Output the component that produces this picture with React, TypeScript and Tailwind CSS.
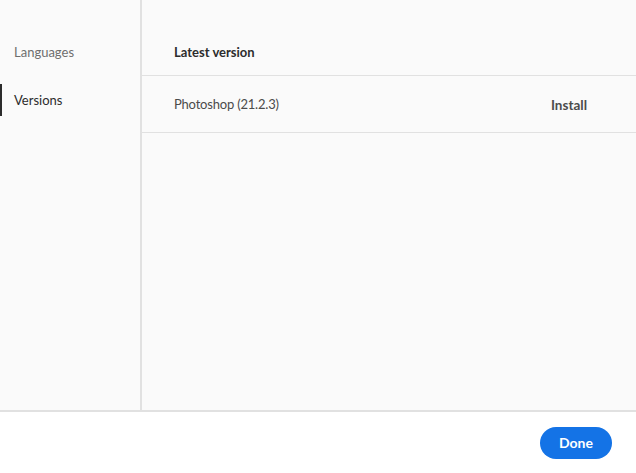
import React from 'react';

const font = { fontFamily: 'Lato, "Liberation Sans", sans-serif' };

export default function App() {
  return (
    <div className="w-[636px] h-[473px] flex flex-col bg-white text-[13px]" style={font}>
      {/* Body */}
      <div className="flex h-[412px] bg-[#fafafa] border-b-2 border-[#e1e1e1]">
        {/* Sidebar */}
        <nav className="w-[142px] shrink-0 border-r-2 border-[#e1e1e1] pt-[36px] flex flex-col gap-4">
          <div className="h-8 flex items-center pt-[2px] pl-[14px] text-[#6e6e6e]">Languages</div>
          <div className="h-8 flex items-center pt-[2px] pl-[12px] border-l-2 border-[#2c2c2c] text-[#2c2c2c]">Versions</div>
        </nav>

        {/* Content */}
        <div className="flex-1 pt-[28px]">
          <div className="h-[48px] flex items-center pt-[2px] pl-8 border-b border-[#e1e1e1] font-bold text-[#2c2c2c]">
            Latest version
          </div>
          <div className="h-[57px] flex items-center justify-between pt-[2px] pl-8 pr-[49px] border-b border-[#e1e1e1] text-[#4b4b4b]">
            <span className="tracking-[-0.2px]">Photoshop (21.2.3)</span>
            <button className="font-bold text-[#4b4b4b] text-[13.5px]">Install</button>
          </div>
        </div>
      </div>

      {/* Footer */}
      <div className="flex-1 flex items-center justify-end pr-6">
        <button className="w-[72px] h-8 rounded-full bg-[#1473e6] text-white font-bold text-[14px]">
          Done
        </button>
      </div>
    </div>
  );
}
